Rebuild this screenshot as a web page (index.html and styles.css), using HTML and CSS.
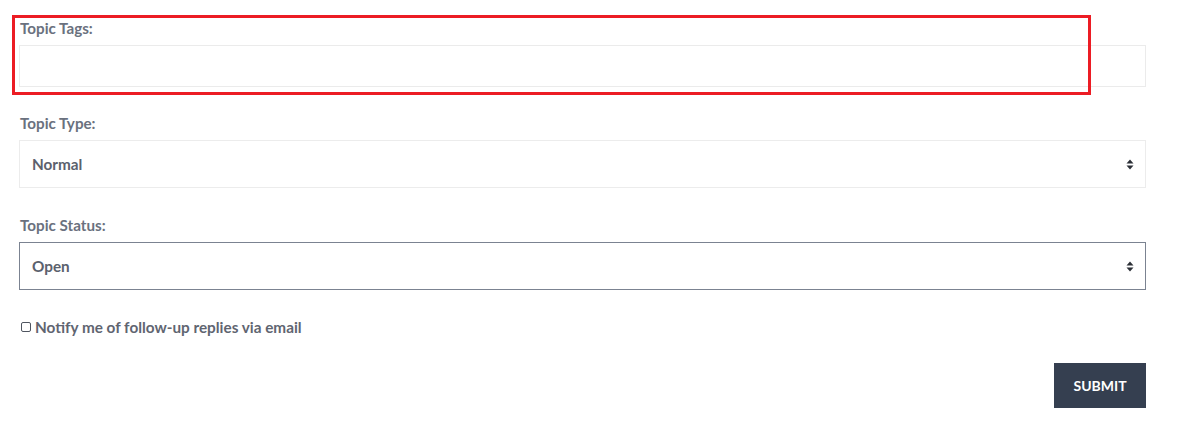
FILE: index.html
```html
<!DOCTYPE html>
<html>
<head>
<meta charset="utf-8">
<link rel="stylesheet" href="styles.css">
</head>
<body>
<form class="form">
  <div class="group g-tags">
    <label class="label">Topic Tags:</label>
    <div class="input"></div>
  </div>
  <div class="group g-type">
    <label class="label">Topic Type:</label>
    <div class="select">
      <span>Normal</span>
      <svg class="arrows" width="8" height="11" viewBox="0 0 8 11"><path d="M4 0.5 L7.5 4.5 H0.5 Z M4 10.5 L7.5 6.5 H0.5 Z" fill="#2b2f36"/></svg>
    </div>
  </div>
  <div class="group g-status">
    <label class="label">Topic Status:</label>
    <div class="select active">
      <span>Open</span>
      <svg class="arrows" width="8" height="11" viewBox="0 0 8 11"><path d="M4 0.5 L7.5 4.5 H0.5 Z M4 10.5 L7.5 6.5 H0.5 Z" fill="#2b2f36"/></svg>
    </div>
  </div>
  <div class="check-row">
    <span class="box"></span>
    <span class="check-label">Notify me of follow-up replies via email</span>
  </div>
  <div class="actions">
    <button type="button" class="submit">SUBMIT</button>
  </div>
  <div class="highlight"></div>
</form>
</body>
</html>
```
FILE: styles.css
```css
html, body {
  margin: 0;
  padding: 0;
  background: #ffffff;
}
body {
  font-family: Lato, "Open Sans", Arial, sans-serif;
  width: 1200px;
  height: 422px;
  overflow: hidden;
}
.form {
  position: relative;
  width: 1127px;
  margin-left: 19px;
  padding-top: 19px;
}
.group {
  display: flex;
  flex-direction: column;
}
.label {
  font-size: 15.2px;
  font-weight: 700;
  line-height: 18px;
  color: #6a717e;
  margin-bottom: 8px;
  padding-left: 1px;
}
.g-tags { margin-bottom: 27px; }
.g-type { margin-bottom: 28px; }
.input {
  height: 40px;
  border: 1px solid #ebebeb;
}
.select {
  height: 46px;
  border: 1px solid #ececec;
  display: flex;
  align-items: center;
  justify-content: space-between;
  padding: 0 11px 0 12px;
  font-size: 15.3px;
  font-weight: 700;
  color: #5b616d;
}
.select.active {
  border-color: #7b8391;
}
.arrows {
  display: block;
}
.check-row {
  display: flex;
  align-items: center;
  margin-top: 27px;
  height: 20px;
}
.box {
  width: 8px;
  height: 8px;
  border: 1px solid #4f5560;
  border-radius: 2px;
  margin-left: 2px;
  margin-right: 4px;
}
.check-label {
  font-size: 15.3px;
  font-weight: 700;
  color: #5f6571;
}
.actions {
  display: flex;
  justify-content: flex-end;
  margin-top: 26px;
}
.submit {
  width: 92px;
  height: 45px;
  border: none;
  background: #353f50;
  color: #ffffff;
  font-family: Lato, Arial, sans-serif;
  font-size: 14px;
  font-weight: 700;
  letter-spacing: 0;
  cursor: pointer;
}
.highlight {
  position: absolute;
  left: -7px;
  top: 15px;
  width: 1073px;
  height: 74px;
  border: 3px solid #ec1c24;
  pointer-events: none;
}
```
